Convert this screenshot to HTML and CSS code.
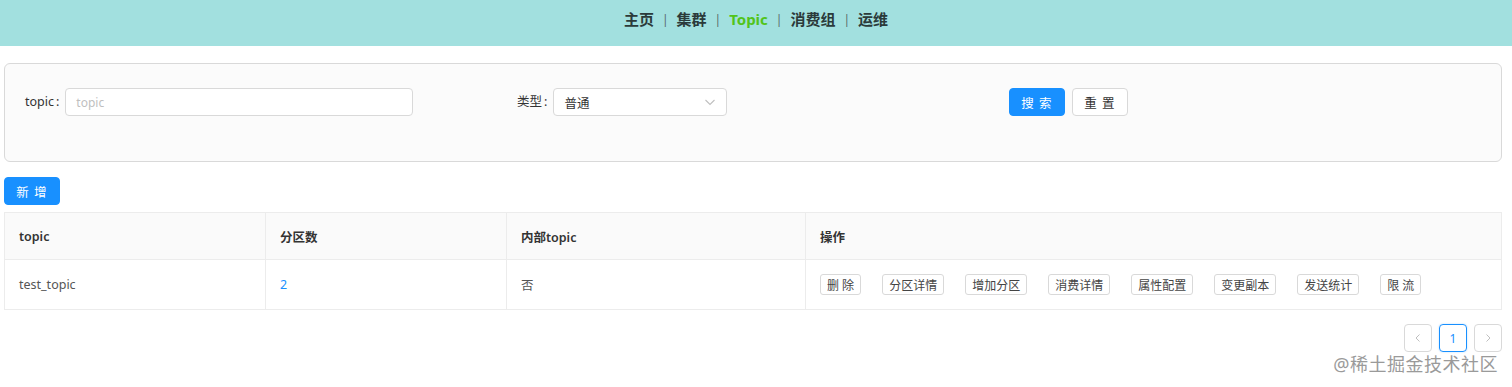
FILE: index.html
```html
<!DOCTYPE html>
<html>
<head>
    <title>Topic</title>
    <link rel="stylesheet" href="styles.css">
</head>
<body>
    <div class="nav">
        <a class="nav-item">主页</a><span class="sep">|</span>
        <a class="nav-item">集群</a><span class="sep">|</span>
        <a class="nav-item active">Topic</a><span class="sep">|</span>
        <a class="nav-item">消费组</a><span class="sep">|</span>
        <a class="nav-item">运维</a>
    </div>

    <div class="main">
        <div class="search-box">
            <div class="field f1">
                <label>topic<span class="colon">:</span></label>
                <input class="input" type="text" placeholder="topic">
            </div>
            <div class="field f2">
                <label>类型<span class="colon">:</span></label>
                <div class="select">
                    <span>普通</span>
                    <svg width="12" height="12" viewBox="0 0 12 12"><path d="M1.5 4 L6 8.5 L10.5 4" fill="none" stroke="#bfbfbf" stroke-width="1.1"/></svg>
                </div>
            </div>
            <div class="field f3">
                <button class="btn primary">搜 索</button>
                <button class="btn">重 置</button>
            </div>
        </div>

        <button class="btn primary add">新 增</button>

        <table class="table">
            <thead>
                <tr>
                    <th class="c1">topic</th>
                    <th class="c2">分区数</th>
                    <th class="c3">内部topic</th>
                    <th>操作</th>
                </tr>
            </thead>
            <tbody>
                <tr>
                    <td>test_topic</td>
                    <td><a class="link">2</a></td>
                    <td>否</td>
                    <td>
                        <div class="ops">
                            <button class="sbtn">删 除</button>
                            <button class="sbtn">分区详情</button>
                            <button class="sbtn">增加分区</button>
                            <button class="sbtn">消费详情</button>
                            <button class="sbtn">属性配置</button>
                            <button class="sbtn">变更副本</button>
                            <button class="sbtn">发送统计</button>
                            <button class="sbtn">限 流</button>
                        </div>
                    </td>
                </tr>
            </tbody>
        </table>

        <div class="pager">
            <span class="page-item"><svg width="10" height="10" viewBox="0 0 10 10"><path d="M6.5 1.5 L3 5 L6.5 8.5" fill="none" stroke="#bfbfbf" stroke-width="1"/></svg></span>
            <span class="page-item current">1</span>
            <span class="page-item"><svg width="10" height="10" viewBox="0 0 10 10"><path d="M3.5 1.5 L7 5 L3.5 8.5" fill="none" stroke="#bfbfbf" stroke-width="1"/></svg></span>
        </div>
    </div>

    <div class="watermark">@稀土掘金技术社区</div>
</body>
</html>
```

FILE: styles.css
```css
body { margin: 0; font-family: "Noto Sans", "Noto Sans CJK SC", sans-serif; font-size: 13px; color: #333; background: #fff; position: relative; height: 387px; overflow: hidden; }

.nav { height: 46px; background: #a2e0df; display: flex; justify-content: center; align-items: flex-start; padding-top: 9px; box-sizing: border-box; font-size: 15px; font-weight: 700; line-height: 21px; }
.nav-item { color: #2b3a3a; }
.nav-item.active { color: #52c41a; }
.sep { color: #5a6b6b; font-weight: 400; font-size: 12px; margin: 0 8px; }

.main { padding: 17px 10px 0 4px; }

.search-box { height: 99px; box-sizing: border-box; border: 1px solid #d9d9d9; border-radius: 6px; background: #fbfbfb; display: grid; grid-template-columns: 492px 492px 1fr; padding: 24px 0 0 20px; }
.field { display: flex; align-items: flex-start; height: 28px; }
.field label { line-height: 28px; font-size: 12.5px; color: #333; }
.colon { margin: 0 6px 0 2px; }
.input { width: 348px; height: 28px; box-sizing: border-box; border: 1px solid #d9d9d9; border-radius: 4px; padding: 0 10px; font: inherit; font-size: 12px; outline: none; }
.input::placeholder { color: #bfbfbf; }
.select { width: 174px; height: 28px; box-sizing: border-box; border: 1px solid #d9d9d9; border-radius: 4px; background: #fff; display: flex; align-items: center; justify-content: space-between; padding: 0 10px; font-size: 12.5px; color: #333; }
.f3 { gap: 7px; }

.btn { height: 28px; width: 56px; padding: 0; border: 1px solid #d9d9d9; border-radius: 4px; background: #fff; color: #333; font: inherit; font-size: 12.5px; letter-spacing: 1px; cursor: pointer; }
.btn.primary { background: #1890ff; border-color: #1890ff; color: #fff; }
.add { margin-top: 15px; display: block; }

.table { margin-top: 7px; width: 100%; border-collapse: collapse; border: 1px solid #ececec; }
.table th { background: #fafafa; height: 46px; text-align: left; font-weight: 600; font-size: 12.5px; color: #333; padding: 0 14px; border-right: 1px solid #ececec; border-bottom: 1px solid #ececec; }
.table td { height: 49px; font-size: 12.5px; color: #555; padding: 0 14px; border-right: 1px solid #ececec; }
.c1 { width: 232px; }
.c2 { width: 212px; }
.c3 { width: 270px; }
.link { color: #1890ff; }
.ops { display: flex; gap: 21px; }
.sbtn { height: 21px; padding: 0 6px; border: 1px solid #d9d9d9; border-radius: 3px; background: #fff; color: #444; font: inherit; font-size: 12px; white-space: nowrap; }

.pager { display: flex; justify-content: flex-end; gap: 7px; margin-top: 14px; }
.page-item { width: 28px; height: 28px; box-sizing: border-box; border: 1px solid #d9d9d9; border-radius: 4px; display: flex; align-items: center; justify-content: center; color: #bbb; font-size: 12px; }
.page-item.current { border-color: #1890ff; color: #1890ff; box-shadow: 0 0 2px rgba(24,144,255,0.3); }

.watermark { position: absolute; right: 14px; top: 350px; font-size: 18px; color: #9a9a9a; letter-spacing: 0.5px; }
```
